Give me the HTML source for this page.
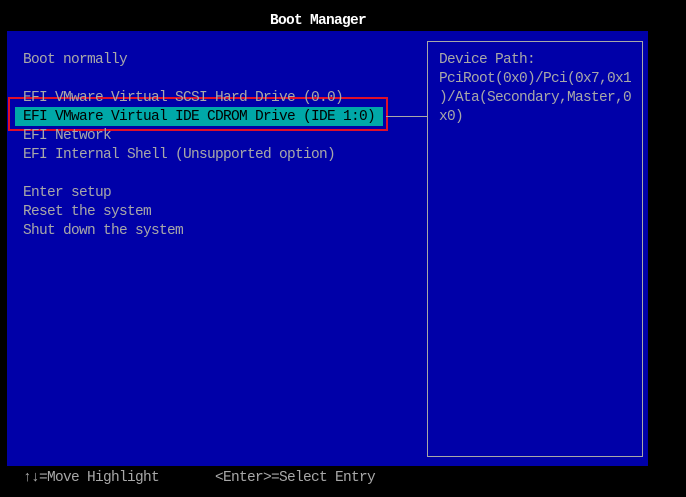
<!DOCTYPE html>
<html><head><style>
body{margin:0;width:686px;height:497px;background:#000;position:relative;overflow:hidden;font-family:"Liberation Mono","DejaVu Sans Mono",monospace;font-size:14.5px;letter-spacing:-0.7px;color:#a8a8a8}
.t{position:absolute;white-space:pre;line-height:19px;height:19px}
#panel{position:absolute;left:7px;top:31px;width:641px;height:435px;background:#0000a8}
</style></head><body>
<div class="t" style="left:270px;top:12px;color:#fff;font-weight:bold">Boot Manager</div>
<div id="panel"></div>
<div style="position:absolute;left:15px;top:107px;width:368px;height:19px;background:#00a8a8"></div>
<div style="position:absolute;left:8px;top:97px;width:376px;height:30px;border:2px solid #e0102a"></div>
<div style="position:absolute;left:386px;top:116px;width:41px;height:1px;background:#a8a8a8"></div>
<div style="position:absolute;left:427px;top:41px;width:214px;height:414px;border:1px solid #a8a8a8"></div>
<div class="t" style="left:23px;top:51px">Boot normally</div>
<div class="t" style="left:23px;top:89px">EFI VMware Virtual SCSI Hard Drive (0.0)</div>
<div class="t" style="left:23px;top:108px;color:#000">EFI VMware Virtual IDE CDROM Drive (IDE 1:0)</div>
<div class="t" style="left:23px;top:127px">EFI Network</div>
<div class="t" style="left:23px;top:146px">EFI Internal Shell (Unsupported option)</div>
<div class="t" style="left:23px;top:184px">Enter setup</div>
<div class="t" style="left:23px;top:203px">Reset the system</div>
<div class="t" style="left:23px;top:222px">Shut down the system</div>
<div class="t" style="left:439px;top:51px">Device Path:</div>
<div class="t" style="left:439px;top:70px">PciRoot(0x0)/Pci(0x7,0x1</div>
<div class="t" style="left:439px;top:89px">)/Ata(Secondary,Master,0</div>
<div class="t" style="left:439px;top:108px">x0)</div>
<div class="t" style="left:23px;top:469px">↑↓=Move Highlight</div>
<div class="t" style="left:215px;top:469px">&lt;Enter&gt;=Select Entry</div>
</body></html>
